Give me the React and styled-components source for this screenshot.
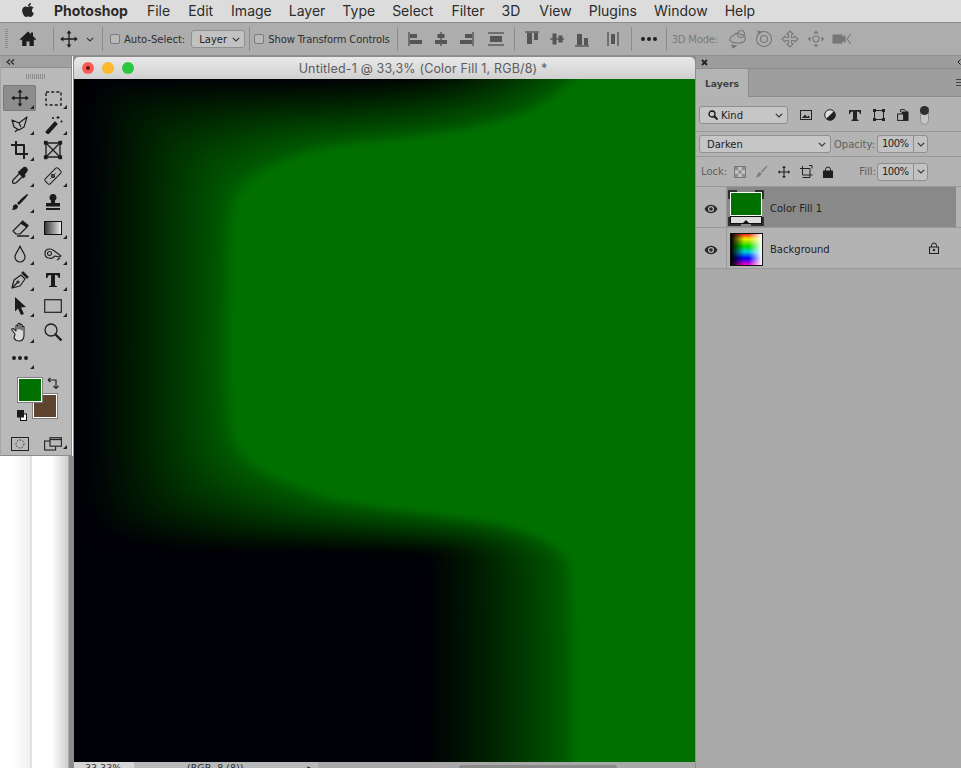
import React from 'react';
import styled, { createGlobalStyle } from 'styled-components';
import { FaApple } from 'react-icons/fa';

const Global = createGlobalStyle`
  html, body { margin: 0; padding: 0; background: #fff; }
  #root { width: 961px; height: 768px; overflow: hidden; }
  * { box-sizing: border-box; }
`;
const UI = `"DejaVu Sans", sans-serif`;

const Page = styled.div`
  width: 961px; height: 768px; display: flex; flex-direction: column; overflow: hidden; background: #fff;
`;
const MenuBar = styled.div`
  height: 22px; flex: none; display: flex; align-items: center; padding-left: 20px;
  background: #dcdcdc; font: 14px/22px Inter, sans-serif; color: #2b2b2b;
`;
const AppleMark = styled.span`display: flex; width: 34px; font-size: 16px; color: #262626; margin-top: -3px;`;
const AppName = styled.span`font-weight: 700; margin-right: 19px;`;
const MenuItem = styled.span`margin-right: ${p => p.$gap}px;`;

const OptionsBar = styled.div`
  height: 34px; flex: none; display: flex; align-items: center; background: #adadad;
  border-top: 1px solid #8e8e8e; border-bottom: 1px solid #8f8f8f; font: 10px ${UI}; color: #262626;
`;
const Grip = styled.div`
  width: 3px; height: 20px; margin-left: 5px; flex: none;
  background: repeating-linear-gradient(180deg, #8b8b8b 0 1px, transparent 1px 2px);
`;
const Slot = styled.div`
  width: ${p => p.$w}px; flex: none; display: flex; align-items: center; justify-content: ${p => p.$end ? 'flex-end' : 'center'}; color: ${p => p.$dim ? '#7f7f7f' : '#222'};
`;
const VSep = styled.div`width: 1px; height: 24px; flex: none; background: #8c8c8c;`;
const Check = styled.span`
  width: 10px; height: 10px; flex: none; border: 1px solid #7b7b7b; border-radius: 2px; background: #b9b9b9;
`;
const OptLabel = styled.span`white-space: nowrap; color: ${p => p.$dim ? '#7a7a7a' : '#2e2e2e'}; margin-left: ${p => p.$ml || 0}px; letter-spacing: ${p => p.$ls || 0}px;`;
const Select = styled.div`
  width: ${p => p.$w}px; height: ${p => p.$h || 18}px; flex: none; display: flex; align-items: center; justify-content: space-between;
  padding: 0 4px 0 ${p => p.$pl || 7}px; background: ${p => p.$bg || '#c2c2c2'}; border: 1px solid #8f8f8f; border-radius: 3px;
  font: 10px ${UI}; color: #222;
`;
const KindLabel = styled.span`display: flex; align-items: center; gap: 3px;`;

const Workspace = styled.div`flex: 1; display: flex; min-height: 0;`;
const LeftColumn = styled.div`width: 73px; flex: none; display: flex; flex-direction: column;`;
const Desk = styled.div`
  flex: 1;
  background: linear-gradient(90deg, #fff 0 12px, #f0f0f0 30px, #c9c9c9 31px, #fff 32px, #fff 52px, #cfcfcf 68px, #8b8b8b 69px, #8b8b8b 73px);
`;
const ToolsPanel = styled.div`
  width: 72px; height: 400px; flex: none; display: flex; flex-direction: column; background: #b9b9b9;
  border: 1px solid #8c8c8c; border-top: 0; border-left-color: #a5a5a5;
`;
const ToolsHead = styled.div`
  height: 12px; flex: none; background: #a0a0a0; border-bottom: 1px solid #8f8f8f; display: flex; align-items: center; padding-left: 5px;
`;
const ToolsGrip = styled.div`
  height: 17px; flex: none; display: flex; justify-content: center; align-items: center;
  &::before { content: ''; width: 20px; height: 5px; background: repeating-linear-gradient(90deg, #8c8c8c 0 1px, transparent 1px 2px); }
`;
const ToolGrid = styled.div`display: grid; grid-template-columns: 33px 33px; grid-auto-rows: 26px; padding-left: 2px;`;
const Tool = styled.div`
  position: relative; display: flex; align-items: center; justify-content: center; color: #1d1d1d; border-radius: 2px;
  ${p => p.$active && 'background:#8d8d8d; box-shadow: inset 0 0 0 1px #7a7a7a;'}
  ${p => p.$corner !== false && `&::after { content:''; position:absolute; right:2px; bottom:2px; width:0; height:0; border-left:4px solid transparent; border-bottom:4px solid #222; }`}
`;
const Swatches = styled.div`position: relative; height: 56px; margin-top: 6px; flex: none;`;
const Swatch = styled.div`
  position: absolute; left: ${p => p.$x}px; top: ${p => p.$y}px; width: 26px; height: 26px;
  border: 1px solid #7e7e7e; box-shadow: inset 0 0 0 1px #fff; background: ${p => p.$c};
`;
const SwatchIcon = styled.div`position: absolute; left: ${p => p.$x}px; top: ${p => p.$y}px; display: flex;`;
const MaskRow = styled.div`display: grid; grid-template-columns: 33px 33px; padding-left: 2px; height: 22px; align-items: center;`;

const DocWindow = styled.div`
  width: 622px; flex: none; display: flex; flex-direction: column; background: #8b8b8b; padding-left: 1px; padding-top: 1px;
`;
const TitleBar = styled.div`
  height: 22px; flex: none; display: flex; align-items: center; position: relative; border-radius: 5px 5px 0 0;
  background: linear-gradient(180deg, #e9e9e9, #d0d0d0); padding-left: 8px; gap: 8px;
  font: 12.5px Inter, sans-serif; color: #5c5c5c;
`;
const Light = styled.span`
  width: 12px; height: 12px; border-radius: 50%; background: ${p => p.$c}; flex: none; display: flex; align-items: center; justify-content: center;
  &::after { content: ''; width: 4px; height: 4px; border-radius: 50%; background: ${p => p.$dot || 'transparent'}; }
`;
const Title = styled.span`position: absolute; left: 77px; right: 0; text-align: center; letter-spacing: .16px;`;
const CanvasSvg = styled.svg`display: block; width: 621px; height: 683px; flex: none; background: #000;`;
const StatusBar = styled.div`height: 6px; flex: none; display: flex; background: #a9a9a9; overflow: hidden; font: 9.5px/12px ${UI}; color: #2b2b2b;`;
const Zoom = styled.div`width: 60px; background: #d6d6d6; padding-left: 11px;`;
const Info = styled.div`width: 184px; background: #b9b9b9; padding: 0 6px 0 53px; white-space: nowrap; display: flex; justify-content: space-between;`;
const Track = styled.div`flex: 1; padding: 3px 0 0 141px;`;
const Thumb = styled.div`width: 158px; height: 6px; border-radius: 3px; background: #8a8a8a;`;

const RightPanel = styled.div`
  flex: 1; display: flex; flex-direction: column; background: #a9a9a9; border-left: 1px solid #8e8e8e; font: 10px ${UI}; color: #2c2c2c;
`;
const PanelHead = styled.div`
  height: 13px; flex: none; display: flex; align-items: center; justify-content: space-between; background: #9c9c9c; border-bottom: 1px solid #8c8c8c; padding: 0 0 0 5px;
`;
const TabRow = styled.div`height: 28px; flex: none; display: flex; justify-content: space-between; background: #9e9e9e; border-bottom: 1px solid #8c8c8c;`;
const Tab = styled.div`
  width: 53px; height: 28px; background: #b4b4b4; border-right: 1px solid #8c8c8c; font-weight: 700; font-size: 9.2px; color: #3f3f3f; display: flex; align-items: center; padding-left: 9px;
`;
const Menu3 = styled.div`
  width: 5px; height: 7px; margin-top: 10px; background: repeating-linear-gradient(180deg, #444 0 1px, transparent 1px 3px);
`;
const PanelBody = styled.div`background: #b3b3b3; flex: none; display: flex; flex-direction: column;`;
const FilterRow = styled.div`
  height: 35px; display: flex; align-items: center; padding: 2px 0 0 3px; border-bottom: 1px solid #999;
`;
const BlendRow = styled.div`
  height: 25px; display: flex; align-items: center; padding-left: 3px; border-bottom: 1px solid #999;
`;
const LockRow = styled.div`
  height: 30px; display: flex; align-items: center; padding-left: 5px; border-bottom: 1px solid #999;
`;
const Dim = styled.span`color: #5f5f5f; white-space: nowrap; width: ${p => p.$w}px; margin-left: ${p => p.$ml || 0}px; text-align: ${p => p.$right ? 'right' : 'left'}; margin-right: ${p => p.$right ? 1 : 0}px; flex: none;`;
const NumBox = styled.div`
  width: 51px; height: 18px; flex: none; display: flex; background: #c2c2c2; border: 1px solid #8f8f8f; border-radius: 3px; font: 10px/16px ${UI}; color: #222; letter-spacing: -.5px;
`;
const NumVal = styled.div`width: 36px; padding-left: 4px; border-right: 1px solid #8f8f8f;`;
const NumChev = styled.div`flex: 1; display: flex; align-items: center; justify-content: center;`;
const IconBtn = styled.div`width: ${p => p.$w}px; flex: none; display: flex; justify-content: center; color: ${p => p.$c || '#222'};`;
const Toggle = styled.div`
  width: 9px; height: 19px; border: 1px solid #8f8f8f; border-radius: 5px; background: #c4c4c4; position: relative; flex: none;
  &::before { content:''; position:absolute; left:-1px; top:-1px; width:9px; height:9px; border-radius:50%; background:#2e2e2e; }
`;
const LayerRow = styled.div`
  height: 41px; flex: none; display: flex; border-bottom: 1px solid #999;
`;
const EyeCol = styled.div`width: 31px; flex: none; display: flex; align-items: center; justify-content: center; border-right: 1px solid #999; padding-top: 3px;`;
const LayerMain = styled.div`
  width: 229px; flex: none; display: flex; align-items: center; background: ${p => p.$sel ? '#898989' : '#b3b3b3'}; position: relative; padding: 2px 0 0 ${p => p.$pl}px;
`;
const Rest = styled.div`flex: 1; background: #b3b3b3;`;
const LayerName = styled.span`margin-left: ${p => p.$ml}px; color: #1f1f1f; white-space: nowrap;`;
const FillFrame = styled.div`
  position: relative; margin-left: 1px; padding: 2px 0 0 2px; width: 36px; height: 36px; flex: none;
`;
const FrameMarks = styled.svg`position: absolute; inset: 0;`;
const FillThumb = styled.div`
  width: 32px; height: 32px; flex: none; display: flex; flex-direction: column;
`;
const FillTop = styled.div`height: 24px; flex: none; background: #007000; border: 1px solid #fff;`;
const FillLine = styled.div`flex: 1; display: flex; align-items: flex-end; justify-content: center; border: 1px solid #111; background: #dedede;
  &::after { content:''; border-left:3px solid transparent; border-right:3px solid transparent; border-bottom:3px solid #111; }
`;
const RainbowThumb = styled.div`
  width: 33px; height: 33px; flex: none; border: 1px solid #111;
  background: linear-gradient(90deg,#000 0,rgba(0,0,0,0) 42%,rgba(255,255,255,0) 58%,#fff 100%),
    linear-gradient(180deg,#e22 0,#ee0 16%,#0d0 40%,#0cd 58%,#00f 78%,#f0c 100%);
`;
const LockSlot = styled.div`position: absolute; right: 16px; top: 50%; transform: translateY(-50%); display: flex;`;

const S = ({ w = 20, h = 20, vb, children, sw = 1.3, fill = 'none', c = 'currentColor' }) => (
  <svg width={w} height={h} viewBox={vb || `0 0 ${w} ${h}`} fill={fill} stroke={fill === 'none' ? c : 'none'} strokeWidth={sw} strokeLinejoin="round">{children}</svg>
);
const Chevron = ({ w = 8, h = 5 }) => <svg width={w} height={h} viewBox="0 0 8 5" fill="none" stroke="#333" strokeWidth="1.1"><path d="M.8 .8 4 4 7.2 .8" /></svg>;
const Home = () => <S fill="#1c1c1c"><path d="M10 2.5 1.8 10.2 3 11.3l1.2-1V17h4.3v-4.4h3V17h4.3v-6.700l1.2 1 1.2-1.100L15 7.100V3.600h-2v1.600z" /></S>;
const Move = ({ c = '#1b1b1b' }) => (
  <S vb="0 0 20 20" c={c} sw={1.3}>
    <path d="M10 3v14M3 10h14" /><path d="M10 1.200 7.600 4.400h4.800zM10 18.800l-2.400-3.200h4.800zM1.200 10l3.200-2.400v4.800zM18.800 10l-3.200-2.400v4.800z" fill={c} stroke="none" />
  </S>
);
const Align = ({ kind }) => {
  const b = {
    l: <><path d="M3 3v14" stroke="#333" /><rect x="4" y="5" width="7" height="4" /><rect x="4" y="11" width="12" height="4" /></>,
    c: <><path d="M10 3v14" stroke="#333" /><rect x="6.500" y="5" width="7" height="4" /><rect x="4" y="11" width="12" height="4" /></>,
    r: <><path d="M17 3v14" stroke="#333" /><rect x="9" y="5" width="7" height="4" /><rect x="4" y="11" width="12" height="4" /></>,
    h: <><path d="M2 4h16M2 16h16" stroke="#333" /><rect x="4" y="7" width="12" height="6" /></>,
    t: <><path d="M3 3h14" stroke="#333" /><rect x="5" y="4" width="5" height="11" /><rect x="12" y="4" width="4" height="7" /></>,
    m: <><path d="M3 10h14" stroke="#333" /><rect x="5.500" y="4.500" width="4" height="11" /><rect x="11.500" y="6.500" width="4" height="7" /></>,
    b: <><path d="M3 17h14" stroke="#333" /><rect x="5" y="5" width="5" height="11" /><rect x="12" y="9" width="4" height="7" /></>,
    d: <><path d="M5 3v14M15 3v14" stroke="#333" /><rect x="8" y="5" width="4" height="10" /></>,
  };
  return <svg width="20" height="20" viewBox="0 0 20 20" fill="#555" strokeWidth="1">{b[kind]}</svg>;
};
const Dots = ({ w = 18 }) => <svg width={w} height="6" viewBox="0 0 18 6" fill="#1f1f1f"><circle cx="3" cy="3" r="2" /><circle cx="9" cy="3" r="2" /><circle cx="15" cy="3" r="2" /></svg>;
const D3 = ({ k }) => {
  const p = {
    a: <><path d="M6 6c2-3 6-2 7-0 3-1 5 2 4 5-1 3-5 3-7 3-3 0-7 0-8-3 0-2 2-4 4-5z" /><circle cx="13" cy="5" r="3.500" /><path d="M4 16l4 1-3 2z" fill="#777" /></>,
    b: <><circle cx="10" cy="10" r="7.500" /><circle cx="10" cy="10" r="3.500" /><path d="M4 2l3 1-2 2z" fill="#777" /></>,
    c: <><path d="M10 2l3 3-1.500 1v2.500H14L15 7l3 3-3 3-1-1.500h-2.500V14L13 15l-3 3-3-3 1.500-1v-2.500H6L5 13l-3-3 3-3 1 1.500h2.500V6L7 5z" /></>,
    d: <><path d="M7 10a3 3 0 1 0 6 0 3 3 0 1 0-6 0" /><path d="M10 1.500l2.500 3h-5zM10 18.500l2.500-3h-5zM1.500 10l3-2.500v5zM18.500 10l-3-2.500v5z" fill="#777" stroke="none" /></>,
    e: <><rect x="1" y="6" width="9" height="8" fill="#777" /><path d="M10 9l3-2v6l-3-2z" fill="#777" /><path d="M19 5l-4 5 4 5" /></>,
  };
  return <svg width="20" height="20" viewBox="0 0 20 20" fill="none" stroke="#777" strokeWidth="1.100" style={{ overflow: 'visible' }}>{p[k]}</svg>;
};

const I = {
  marquee: <S sw={1.4}><rect x="3" y="4" width="15" height="13" strokeDasharray="3 2.200" /></S>,
  lasso: <S sw={1.2}><path d="M2 6l7 3 8-6-3 10-5 3-5-3zM5 18l3-3M9 9l2 4" /></S>,
  wand: <S sw={1.2}><path d="M3 18 12 8l2 2-9 10z" fill="#1b1b1b" /><path d="M15 2v3M13.500 3.500h3M18.500 6.500v2M17.500 7.500h2M10 3v2M9 4h2" /></S>,
  crop: <S sw={2}><path d="M6 1v13h12M1 5h13v14" fill="none" /></S>,
  frame: <S sw={1.3}><rect x="3" y="3" width="14" height="14" /><path d="M3 3l14 14M17 3 3 17" /><rect x="1.500" y="1.500" width="2.500" height="2.500" fill="#111" /><rect x="16" y="1.500" width="2.500" height="2.500" fill="#111" /><rect x="1.500" y="16" width="2.500" height="2.500" fill="#111" /><rect x="16" y="16" width="2.500" height="2.500" fill="#111" /></S>,
  dropper: <S sw={1.2}><path d="M3 17c-1-1 0-3 1-4l7-7 3 3-7 7c-1 1-3 2-4 1z" /><path d="M10 5l4-3.500c2-1 4 2 3 3.500L14 9l1 1-1.500 1.500-5-5L10 5z" fill="#1b1b1b" /></S>,
  heal: <S sw={1}><rect x="1" y="6.500" width="18" height="7" rx="1.500" transform="rotate(-45 10 10)" /><path d="M7 7l6 6M13 7l-6 6" strokeWidth=".6" /><circle cx="10" cy="10" r="1.500" /></S>,
  brush: <S fill="#1b1b1b"><path d="M18 2c1 1-5 7-9 11l-2-2C11 7 17 1 18 2zM6 12l2 2c0 3-3 4-6 4 1-1 1-3 1-4 1-1 2-2 3-2z" /></S>,
  stamp: <S fill="#1b1b1b"><path d="M10 2a3.500 3.500 0 0 1 2 6.400V11h5v3.500H3V11h5V8.400A3.500 3.500 0 0 1 10 2zM3 16h14v2H3z" /></S>,
  eraser: <S sw={1.2}><path d="M3 13 11 5l6 4-7 7H6z" /><path d="M11 5l6 4 1-1.500-5.500-4.500z" fill="#1b1b1b" /><path d="M7 18h12" strokeWidth="1.500" /></S>,
  gradient: <svg width="18" height="14" viewBox="0 0 18 14"><defs><linearGradient id="gg"><stop offset="0" stopColor="#333" /><stop offset="1" stopColor="#eee" /></linearGradient></defs><rect x=".5" y=".5" width="17" height="13" fill="url(#gg)" stroke="#111" /></svg>,
  drop: <S sw={1.2}><path d="M10 2c1 4 5 7 5 11a5 5 0 0 1-10 0c0-4 4-7 5-11z" /></S>,
  smudge: <S sw={1.1}><path d="M2 9c0-4 4-5 8-3l8 6-2 1-4-1c-2 2-4 3-6 2-3 0-4-2-4-5z" /><circle cx="6.500" cy="9.500" r="2" /><path d="M14 16l3-2" /></S>,
  pen: <S sw={1.2}><path d="M2 18l2-8 7-5 4 4-5 7z" /><path d="M2 18l5-5" /><circle cx="8" cy="12" r="1" /><path d="M12 3l1-1 5 5-1 1z" fill="#1b1b1b" /></S>,
  type: <S fill="#1b1b1b"><path d="M3 3h14v5h-1.500c0-2-1-3-3-3h-.5v10c0 1 1 1 2 1v1H6v-1c1 0 2 0 2-1V5h-.5c-2 0-3 1-3 3H3z" /></S>,
  arrow: <S fill="#1b1b1b"><path d="M5 1l11 10-5 .500 3 6.500-3 1-3-6.500-3 3z" /></S>,
  rect: <svg width="18" height="14" viewBox="0 0 18 14"><rect x=".7" y=".7" width="16.600" height="12.600" fill="#b9b9b9" stroke="#222" strokeWidth="1.200" /></svg>,
  hand: <S vb="0 0 20 22" w={20} h={22} sw={1.100} c="#222"><path d="M5 13 2 9c-1-1 1-2 2-1l2 2V5c0-1 2-1 2 0v3-5c0-1 2-1 2 0v5-4c0-1 2-1 2 0v5-3c0-1 2-1 2 0v8c0 4-2 6-5 6-2 0-4-1-5-3z" fill="#d8d8d8" /></S>,
  zoom: <S sw={1.3}><circle cx="8" cy="8" r="6" /><path d="M12.500 12.500 18.500 18.500" strokeWidth="2.400" /></S>,
  mask: <svg width="18" height="14" viewBox="0 0 18 14" fill="none" stroke="#222"><rect x=".5" y=".5" width="17" height="13" /><circle cx="9" cy="7" r="4" strokeDasharray="1.500 1.500" /></svg>,
  screen: <svg width="18" height="14" viewBox="0 0 18 14" fill="none" stroke="#222" strokeWidth="1.100"><rect x=".6" y="4" width="11" height="9" fill="#b9b9b9" /><rect x="6" y=".7" width="11.400" height="8.500" fill="#b9b9b9" /><path d="M6 2.500h11.400" strokeWidth="1.300" /></svg>,
};

const pairs = [
  [[506, 0], [340, -4]], [[481, 20], [320, -4]], [[450, 38], [290, -4]], [[396, 53], [230, -4]], [[337, 61], [180, -4]],
  [[257, 69], [100, -4]], [[204, 87], [40, -4]], [[175, 107], [15, -2]], [[161, 130], [6, 10]], [[158, 200], [4, 120]], [[157, 340], [4, 360]],
  [[170, 374], [4, 430]], [[198, 394], [20, 462]], [[238, 411], [90, 474]], [[277, 423], [150, 476]], [[396, 438], [270, 476]], [[440, 446], [320, 476]],
  [[473, 460], [340, 476]], [[497, 477], [346, 482]], [[501, 495], [346, 500]], [[502, 540], [346, 540]], [[503, 700], [346, 700]],
];
const contour = t => {
  const pts = pairs.map(([a, b]) => [a[0] + (b[0] - a[0]) * t, a[1] + (b[1] - a[1]) * t]);
  let d = `M 640 -10 L ${pts[0][0]} -10 L ${pts[0][0]} ${pts[0][1]}`;
  for (let i = 1; i < pts.length - 1; i++) {
    const mx = (pts[i][0] + pts[i + 1][0]) / 2, my = (pts[i][1] + pts[i + 1][1]) / 2;
    d += ` Q ${pts[i][0]} ${pts[i][1]} ${mx} ${my}`;
  }
  return d + ` L ${pts[pts.length - 1][0]} 700 L 640 700 Z`;
};
const ramp = t => 98 * Math.pow(1 - t, 1.25) + 14 * Math.max(0, 1 - t / 0.08);
const blue = t => 8 * Math.max(0, (t - .5) / .5);
const STEPS = 140;
const levels = Array.from({ length: STEPS + 1 }, (_, i) => 1 - i / STEPS);

const Canvas = () => (
  <CanvasSvg viewBox="0 0 621 683">
    <defs>
      <linearGradient id="bk" x1="0" y1="0" x2="0" y2="1"><stop offset=".25" stopColor="#000" /><stop offset=".7" stopColor="#000008" /></linearGradient>
      <filter id="sm" x="-5%" y="-5%" width="110%" height="110%" colorInterpolationFilters="sRGB"><feGaussianBlur stdDeviation="3" /></filter>
    </defs>
    <rect width="621" height="683" fill="url(#bk)" />
    <g filter="url(#sm)">
      {levels.map(t => <path key={t} d={contour(t)} fill={`rgb(0,${ramp(t).toFixed(1)},${blue(t).toFixed(1)})`} />)}
    </g>
  </CanvasSvg>
);

const Eye = () => <svg width="14" height="10" viewBox="0 0 14 10"><path d="M.5 5C2 2 4.500.8 7 .8S12 2 13.500 5C12 8 9.500 9.200 7 9.200S2 8 .5 5z" fill="#2a2a2a" /><circle cx="7" cy="5" r="3" fill="#b3b3b3" /><circle cx="7" cy="5" r="1.800" fill="#2a2a2a" /></svg>;
const Lock = ({ size = 12, outline }) => (
  <svg width={size} height={size} viewBox="0 0 12 12" fill={outline ? 'none' : '#1f1f1f'} stroke="#1f1f1f" strokeWidth="1">
    <path d="M3.500 5V3.500a2.500 2.500 0 0 1 5 0V5" fill="none" /><rect x="1.500" y="5" width="9" height="6.500" />{outline && <circle cx="6" cy="8" r=".8" fill="#1f1f1f" />}
  </svg>
);

export default function App() {
  const menu = [['File', 18], ['Edit', 18], ['Image', 17], ['Layer', 17], ['Type', 17], ['Select', 18], ['Filter', 17], ['3D', 19], ['View', 17], ['Plugins', 17], ['Window', 17], ['Help', 0]];
  const tools = [
    [<Move />, true], [I.marquee], [I.lasso], [I.wand], [I.crop], [I.frame, false], [I.dropper], [I.heal], [I.brush], [I.stamp, false],
    [I.eraser], [I.gradient], [I.drop], [I.smudge], [I.pen], [I.type], [I.arrow], [I.rect], [I.hand], [I.zoom, false],
  ];
  return (
    <Page>
      <Global />
      <MenuBar>
        <AppleMark><FaApple /></AppleMark>
        <AppName>Photoshop</AppName>
        {menu.map(([m, g]) => <MenuItem key={m} $gap={g}>{m}</MenuItem>)}
      </MenuBar>
      <OptionsBar>
        <Grip />
        <Slot $w={40}><Home /></Slot>
        <Slot $w={5} />
        <VSep />
        <Slot $w={30}><Move /></Slot>
        <Slot $w={12}><Chevron /></Slot>
        <Slot $w={6} />
        <VSep />
        <Slot $w={17} $end><Check /></Slot>
        <OptLabel $ml={4}>Auto-Select:</OptLabel>
        <Slot $w={6} />
        <Select $w={54}>Layer<Chevron /></Select>
        <Slot $w={4} />
        <VSep />
        <Slot $w={14} $end><Check /></Slot>
        <OptLabel $ml={4} $ls={-0.13}>Show Transform Controls</OptLabel>
        <Slot $w={7} />
        <VSep />
        <Slot $w={6} />
        {['l', 'c', 'r'].map(k => <Slot key={k} $w={25}><Align kind={k} /></Slot>)}
        <Slot $w={35}><Align kind="h" /></Slot>
        <VSep />
        <Slot $w={5} />
        {['t', 'm', 'b'].map(k => <Slot key={k} $w={25}><Align kind={k} /></Slot>)}
        <Slot $w={36}><Align kind="d" /></Slot>
        <VSep />
        <Slot $w={34}><Dots /></Slot>
        <VSep />
        <OptLabel $dim $ml={5} $ls={-0.2}>3D Mode:</OptLabel>
        <Slot $w={7} />
        {['a', 'b', 'c', 'd', 'e'].map(k => <Slot key={k} $w={26}><D3 k={k} /></Slot>)}
      </OptionsBar>
      <Workspace>
        <LeftColumn>
          <ToolsPanel>
            <ToolsHead><svg width="9" height="6" viewBox="0 0 9 6" fill="none" stroke="#222" strokeWidth="1.100"><path d="M4 .5 1 3l3 2.500M8 .5 5 3l3 2.500" /></svg></ToolsHead>
            <ToolsGrip />
            <ToolGrid>
              {tools.map(([icon, flag], i) => <Tool key={i} $active={flag === true} $corner={flag === false ? false : true}>{icon}</Tool>)}
              <Tool><Dots /></Tool>
            </ToolGrid>
            <Swatches>
              <Swatch $x={31} $y={16} $c="#5f4530" />
              <Swatch $x={16} $y={0} $c="#007000" />
              <SwatchIcon $x={46} $y={0}>
                <svg width="13" height="13" viewBox="0 0 13 13" fill="none" stroke="#222" strokeWidth="1.200"><path d="M1 3h8v7" /><path d="M1 3l2.500-2M1 3l2.500 2M9 11.500 6.500 9M9 11.500 11.500 9" /></svg>
              </SwatchIcon>
              <SwatchIcon $x={16} $y={33}>
                <svg width="10" height="11" viewBox="0 0 10 11"><rect x="3.500" y="4" width="6" height="6.500" fill="#fff" stroke="#111" /><rect x="0" y="0" width="7" height="7.500" fill="#1a1a1a" /></svg>
              </SwatchIcon>
            </Swatches>
            <MaskRow>
              <Tool $corner={false}>{I.mask}</Tool>
              <Tool>{I.screen}</Tool>
            </MaskRow>
          </ToolsPanel>
          <Desk />
        </LeftColumn>
        <DocWindow>
          <TitleBar>
            <Light $c="#fb5b57" $dot="#6b0f0c" />
            <Light $c="#fdb82e" />
            <Light $c="#2ac83f" />
            <Title>Untitled-1 @ 33,3% (Color Fill 1, RGB/8) *</Title>
          </TitleBar>
          <Canvas />
          <StatusBar>
            <Zoom>33,33%</Zoom>
            <Info><span>(RGB, 8 (8))</span><span>▸</span></Info>
            <Track><Thumb /></Track>
          </StatusBar>
        </DocWindow>
        <RightPanel>
          <PanelHead>
            <svg width="7" height="7" viewBox="0 0 7 7" stroke="#222" strokeWidth="1.800"><path d="M1 1l5 5M6 1 1 6" /></svg>
            <svg width="4" height="6" viewBox="0 0 4 6" fill="none" stroke="#222"><path d="M3.500.5 1 3l2.500 2.500" /></svg>
          </PanelHead>
          <TabRow><Tab>Layers</Tab><Menu3 /></TabRow>
          <PanelBody>
            <FilterRow>
              <Select $w={89} $pl={8} $bg="#c6c6c6">
                <KindLabel>
                  <svg width="10" height="10" viewBox="0 0 10 10" fill="none" stroke="#111" strokeWidth="1.300"><circle cx="4" cy="4" r="3" /><path d="M6.500 6.500 9.500 9.500" strokeWidth="1.800" /></svg>Kind
                </KindLabel><Chevron />
              </Select>
              <Slot $w={5} />
              <IconBtn $w={25}><svg width="12" height="10" viewBox="0 0 12 10" fill="none" stroke="#222"><rect x=".5" y=".5" width="11" height="9" /><path d="M2 8l3-3.500L7 7l1.500-1.500L10 8z" fill="#222" stroke="none" /></svg></IconBtn>
              <IconBtn $w={24}><svg width="12" height="12" viewBox="0 0 12 12"><circle cx="6" cy="6" r="5.300" fill="#ddd" stroke="#222" /><path d="M6 6 2.200 9.800A5.300 5.300 0 0 0 9.800 2.200z" fill="#222" /></svg></IconBtn>
              <IconBtn $w={25}><svg width="12" height="11" viewBox="0 0 12 11" fill="#222"><path d="M0 0h12v4h-1c0-1.500-1-2.500-3-2.500V9c0 .6.700.8 1.500.8V11h-7V9.800C3.300 9.800 4 9.600 4 9V1.500C2 1.500 1 2.500 1 4H0z" /></svg></IconBtn>
              <IconBtn $w={24}><svg width="12" height="12" viewBox="0 0 12 12" fill="#222"><rect x="1.500" y="1.500" width="9" height="9" fill="none" stroke="#222" /><rect width="3" height="3" /><rect x="9" width="3" height="3" /><rect y="9" width="3" height="3" /><rect x="9" y="9" width="3" height="3" /></svg></IconBtn>
              <IconBtn $w={24}><svg width="12" height="12" viewBox="0 0 12 12" fill="none" stroke="#222"><path d="M3.500 3V.6h4l2 2V3" /><rect x="5" y="3" width="6" height="8.400" fill="#222" /><rect x=".6" y="5" width="6" height="6.400" fill="#b3b3b3" /></svg></IconBtn>
              <Slot $w={5} />
              <Toggle />
            </FilterRow>
            <BlendRow>
              <Select $w={132} $pl={7} $bg="#c6c6c6">Darken<Chevron /></Select>
              <Dim $ml={3} $w={43}>Opacity:</Dim>
              <NumBox><NumVal>100%</NumVal><NumChev><Chevron /></NumChev></NumBox>
            </BlendRow>
            <LockRow>
              <Dim $w={33}>Lock:</Dim>
              <IconBtn $w={12}><svg width="12" height="12" viewBox="0 0 12 12"><rect x=".5" y=".5" width="11" height="11" fill="#c8c8c8" stroke="#777" /><rect x="1" y="1" width="3.300" height="3.300" fill="#8f8f8f" /><rect x="7.600" y="1" width="3.300" height="3.300" fill="#8f8f8f" /><rect x="4.300" y="4.300" width="3.300" height="3.300" fill="#8f8f8f" /><rect x="1" y="7.600" width="3.300" height="3.300" fill="#8f8f8f" /><rect x="7.600" y="7.600" width="3.300" height="3.300" fill="#8f8f8f" /></svg></IconBtn>
              <IconBtn $w={30}><svg width="13" height="13" viewBox="0 0 13 13" fill="#7f7f7f"><path d="M12.500.5c.5.500-3 5-5.500 7L6 6.500C8 4 12 0 12.500.5zM5 7l1.500 1.500C6 11 3 12.500 1 12.500c1-1 1-2.500 1.500-3.500.500-1 1.500-2 2.500-2z" /></svg></IconBtn>
              <IconBtn $w={16}><svg width="14" height="14" viewBox="0 0 20 20" fill="#222" stroke="#222" strokeWidth="1.600"><path d="M10 3v14M3 10h14" /><path d="M10 1 7.400 4.400h5.200zM10 19l-2.600-3.400h5.200zM1 10l3.400-2.600v5.200zM19 10l-3.400-2.600v5.200z" stroke="none" /></svg></IconBtn>
              <IconBtn $w={28}><svg width="14" height="14" viewBox="0 0 14 14" fill="none" stroke="#222"><path d="M1 3.500h10v9H3.500" /><path d="M3.500 1v9h10" /><path d="M10 .5 13 .5 13 3.500" /></svg></IconBtn>
              <IconBtn $w={16}><Lock /></IconBtn>
              <Slot $w={22} />
              <Dim $w={18} $right>Fill:</Dim>
              <NumBox><NumVal>100%</NumVal><NumChev><Chevron /></NumChev></NumBox>
            </LockRow>
            <LayerRow>
              <EyeCol><Eye /></EyeCol>
              <LayerMain $sel $pl={0}>
                <FillFrame>
                  <FrameMarks width="36" height="36" viewBox="0 0 36 36" fill="none" stroke="#111" strokeWidth="1.500">
                    <path d="M1 9V1h8M27 1h8v8M1 27v8h12M23 35h12v-8" />
                  </FrameMarks>
                  <FillThumb><FillTop /><FillLine /></FillThumb>
                </FillFrame>
                <LayerName $ml={6}>Color Fill 1</LayerName>
              </LayerMain>
              <Rest />
            </LayerRow>
            <LayerRow>
              <EyeCol><Eye /></EyeCol>
              <LayerMain $pl={3}>
                <RainbowThumb />
                <LayerName $ml={7}>Background</LayerName>
                <LockSlot><Lock outline /></LockSlot>
              </LayerMain>
              <Rest />
            </LayerRow>
          </PanelBody>
        </RightPanel>
      </Workspace>
    </Page>
  );
}
